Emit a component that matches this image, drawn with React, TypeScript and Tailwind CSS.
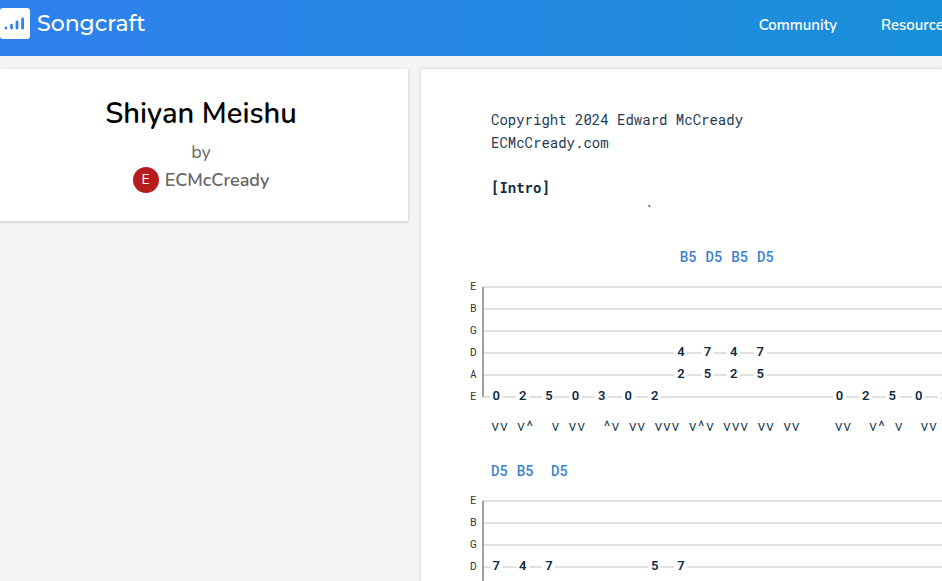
import React from "react";

type Mark = { col: number; text: string };
type Note = { string: number; step: number; fret: string };

const STRINGS = ["E", "B", "G", "D", "A", "E"];

const introChords: Mark[] = [
  { col: 22, text: "B5" },
  { col: 25, text: "D5" },
  { col: 28, text: "B5" },
  { col: 31, text: "D5" },
];

const verseChords: Mark[] = [
  { col: 0, text: "D5" },
  { col: 3, text: "B5" },
  { col: 7, text: "D5" },
];

const introStrums = "vv v^  v vv  ^v vv vvv v^v vvv vv vv    vv  v^ v  vv";

const introNotes: Note[] = [
  ...["0", "2", "5", "0", "3", "0", "2"].map((fret, step) => ({ string: 5, step, fret })),
  ...["4", "7", "4", "7"].map((fret, i) => ({ string: 3, step: 7 + i, fret })),
  ...["2", "5", "2", "5"].map((fret, i) => ({ string: 4, step: 7 + i, fret })),
  ...["0", "2", "5", "0", "3"].map((fret, i) => ({ string: 5, step: 13 + i, fret })),
];

const verseNotes: Note[] = [
  { string: 3, step: 0, fret: "7" },
  { string: 3, step: 1, fret: "4" },
  { string: 3, step: 2, fret: "7" },
  { string: 3, step: 6, fret: "5" },
  { string: 3, step: 7, fret: "7" },
];

function Chords({ marks }: { marks: Mark[] }) {
  return (
    <div className="ml-[70px] grid h-6 w-[515px] grid-cols-[repeat(60,minmax(0,1fr))] font-['Roboto_Mono',Roboto,sans-serif] text-sm leading-6 font-medium text-[#3b7fd0]">
      {marks.map((m) => (
        <span key={m.col} className="row-start-1 whitespace-nowrap" style={{ gridColumnStart: m.col + 1 }}>
          {m.text}
        </span>
      ))}
    </div>
  );
}

function Strums({ pattern }: { pattern: string }) {
  return (
    <div className="ml-[70px] grid h-6 w-[515px] grid-cols-[repeat(60,minmax(0,1fr))] text-center font-['Roboto_Mono',Roboto,sans-serif] text-sm leading-6 text-[#243b53]">
      {pattern.split("").map((c, i) =>
        c === " " ? null : (
          <span key={i} className="row-start-1" style={{ gridColumnStart: i + 1 }}>
            {c}
          </span>
        ),
      )}
    </div>
  );
}

function Staff({ notes }: { notes: Note[] }) {
  return (
    <div className="ml-12 flex font-['Roboto',sans-serif]">
      <div className="w-3.5 shrink-0 pl-px font-['Roboto_Mono',monospace] text-[11px] text-[#333]">
        {STRINGS.map((s, i) => (
          <div key={i} className="h-[22px] leading-5">
            {s}
          </div>
        ))}
      </div>
      <div className="relative shrink-0">
        <div className="absolute top-[11px] bottom-[11px] -left-px w-0.5 bg-[#a0a0a0]" />
        {STRINGS.map((_, i) => (
          <div
            key={i}
            className="grid h-[22px] w-[528px] grid-cols-[repeat(20,minmax(0,1fr))] items-center justify-items-center bg-[linear-gradient(#e0e0e0,#e0e0e0)] bg-[length:100%_2px] bg-center bg-no-repeat"
          >
            {notes
              .filter((n) => n.string === i)
              .map((n) => (
                <span
                  key={n.step}
                  className="row-start-1 w-[13px] bg-white pb-0.5 text-center text-[13px] leading-[18px] font-semibold text-[#102a43]"
                  style={{ gridColumnStart: n.step + 1 }}
                >
                  {n.fret}
                </span>
              ))}
          </div>
        ))}
      </div>
    </div>
  );
}

export default function App() {
  return (
    <div className="h-screen overflow-hidden bg-[#f4f4f4] font-['Nunito',Lato,sans-serif]">
      <header className="flex h-14 items-center justify-between overflow-hidden bg-gradient-to-r from-[#2f80ed] to-[#188fd8] text-white">
        <a href="#" className="flex items-center gap-[7px] pb-[9px]">
          <svg viewBox="0 0 30 31" className="h-[31px] w-[30px]" aria-hidden="true">
            <rect width="30" height="31" rx="3" fill="#fff" />
            <g stroke="#2f80ed" strokeWidth="2.8" strokeLinecap="round">
              <path d="M6 20v.1M11.5 17.2v2.8M17 14v6M22.6 11v9" />
            </g>
          </svg>
          <span className="font-['Montserrat',Inter,sans-serif] text-[22px] leading-8 font-medium">Songcraft</span>
        </a>
        <nav className="-mr-[15px] flex shrink-0 gap-11 pr-1.5 pb-[7px] text-[15px] leading-6 font-semibold">
          <a href="#">Community</a>
          <a href="#">Resources</a>
        </nav>
      </header>

      <main className="flex items-start gap-[13px] pt-[13px]">
        <section className="flex h-[152px] w-[408px] shrink-0 flex-col items-center bg-white pt-[27px] pr-[6px] shadow-[0_1px_3px_rgba(0,0,0,0.2)]">
          <h1 className="text-[29px] leading-9 font-semibold text-black">Shiyan Meishu</h1>
          <p className="mt-2 text-lg leading-6 text-[#666]">by</p>
          <a href="#" className="mt-[3px] flex items-center gap-1.5 text-lg leading-[26px] font-semibold text-[#666]">
            <span className="size-[26px] rounded-full bg-[#b71c1c] text-center text-sm leading-[26px] font-normal text-white">E</span>
            ECMcCready
          </a>
        </section>

        <article className="min-w-0 flex-1 overflow-hidden bg-white pt-[39px] shadow-[0_0_3px_rgba(0,0,0,0.2)]">
          <div className="ml-[70px] font-['Roboto_Mono','DejaVu_Sans_Mono',monospace] text-sm leading-[23px] whitespace-pre text-[#243b53]">
            <p>Copyright 2024 Edward McCready</p>
            <p>ECMcCready.com</p>
            <h2 className="mt-[22px] font-bold text-[#102a43]">[Intro]</h2>
            <p className="ml-[154px] h-[23px]">`</p>
          </div>
          <div className="mt-[23px]">
            <Chords marks={introChords} />
          </div>
          <div className="mt-[7px]">
            <Staff notes={introNotes} />
          </div>
          <div className="mt-1.5">
            <Strums pattern={introStrums} />
          </div>
          <div className="mt-[21px]">
            <Chords marks={verseChords} />
          </div>
          <div className="mt-[7px]">
            <Staff notes={verseNotes} />
          </div>
        </article>
      </main>
    </div>
  );
}
